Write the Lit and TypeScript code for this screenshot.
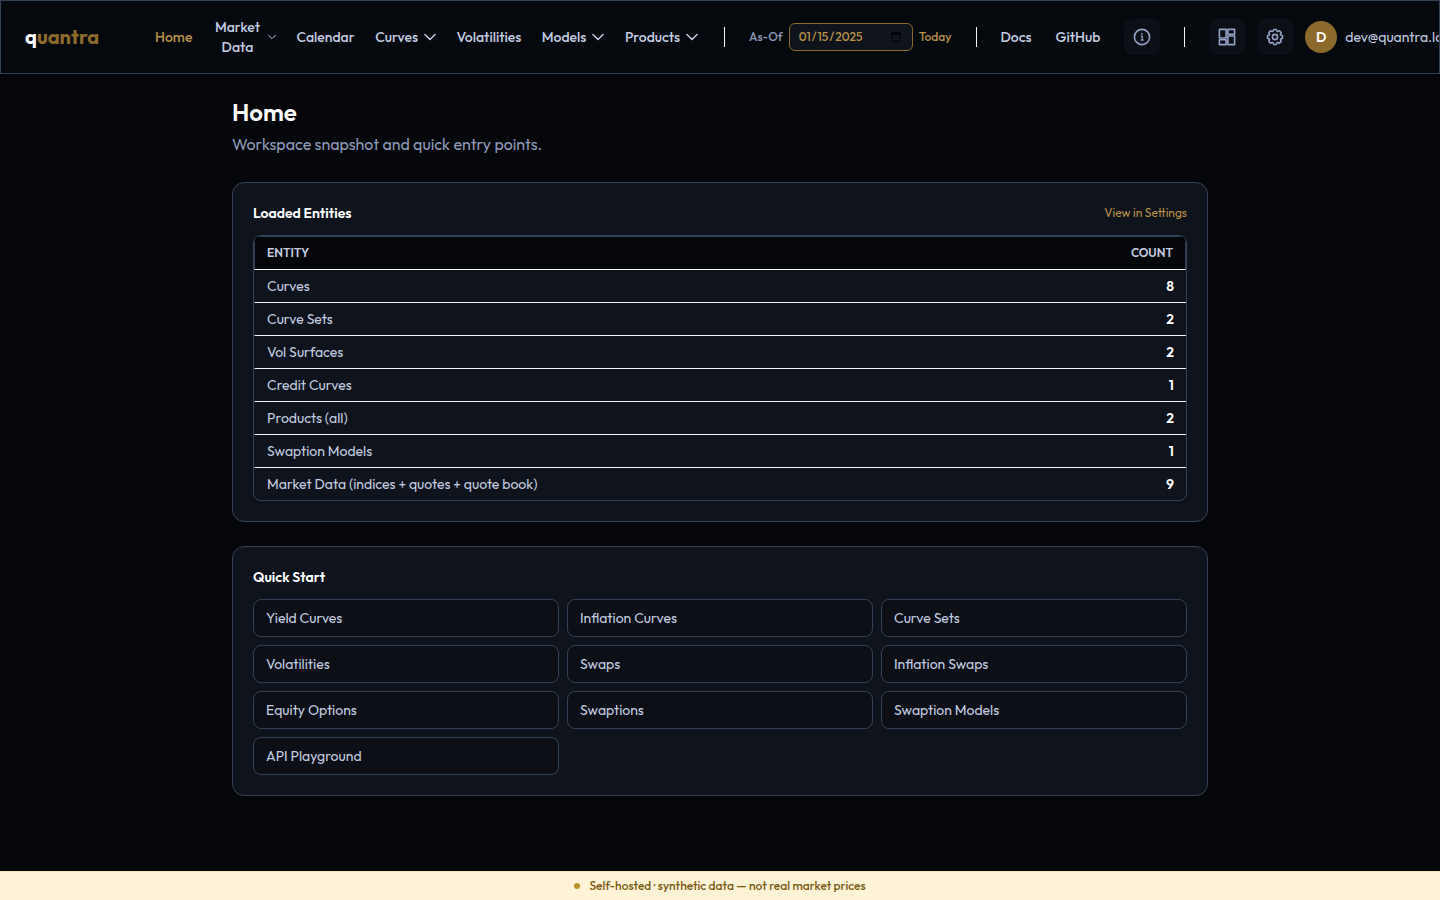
import { LitElement, html, css, svg, nothing } from "lit";
import { customElement } from "lit/decorators.js";

interface NavItem {
  label: string;
  active?: boolean;
  menu?: boolean;
  stacked?: boolean;
}

const NAV: NavItem[] = [
  { label: "Home", active: true },
  { label: "Market Data", menu: true, stacked: true },
  { label: "Calendar" },
  { label: "Curves", menu: true },
  { label: "Volatilities" },
  { label: "Models", menu: true },
  { label: "Products", menu: true },
];

const ENTITIES: [string, number][] = [
  ["Curves", 8],
  ["Curve Sets", 2],
  ["Vol Surfaces", 2],
  ["Credit Curves", 1],
  ["Products (all)", 2],
  ["Swaption Models", 1],
  ["Market Data (indices + quotes + quote book)", 9],
];

const LINKS = [
  "Yield Curves",
  "Inflation Curves",
  "Curve Sets",
  "Volatilities",
  "Swaps",
  "Inflation Swaps",
  "Equity Options",
  "Swaptions",
  "Swaption Models",
  "API Playground",
];

const infoIcon = svg`<circle cx="10" cy="10" r="7.6"/><path d="M8.8 9.2h1.4v3.6M8.7 13.1h2.9" stroke-width="1.3"/><circle cx="9.9" cy="6.8" r=".9" fill="currentColor" stroke="none"/>`;
const boardIcon = svg`<path d="M2.4 2.4h6.7v8.6H2.4zM10.9 2.4h6.7v4.8h-6.7zM10.9 9h6.7v8.6h-6.7zM2.4 12.8h6.7v4.8H2.4z"/>`;

// Eight-lobed cog outline, computed around the centre of a 20px box.
const cogPath = (() => {
  const pts: string[] = [];
  for (let i = 0; i < 8; i++) {
    const a = (i * Math.PI) / 4 - Math.PI / 2;
    for (const [r, d] of [[6.1, -0.34], [7.6, -0.16], [7.6, 0.16], [6.1, 0.34]]) {
      pts.push(`${(10 + r * Math.cos(a + d)).toFixed(2)} ${(10 + r * Math.sin(a + d)).toFixed(2)}`);
    }
  }
  return `M${pts.join("L")}Z`;
})();
const cogIcon = svg`<path d=${cogPath}/><circle cx="10" cy="10" r="2.6"/>`;

@customElement("app-root")
export class AppRoot extends LitElement {
  static styles = css`
    :host {
      --line: #334155;
      --text: #c3cce0;
      --muted: #8f9bb8;
      --gold: #b8904a;
      --deep-gold: #8c6a2c;
      display: flex;
      flex-direction: column;
      min-height: 100vh;
      background: #04060a;
      color: var(--text);
      font: 14px/20px Outfit, Lato, sans-serif;
    }
    *, *::before { box-sizing: border-box; }
    h1, h2, p { margin: 0; }
    a { color: inherit; text-decoration: none; }
    button { font: inherit; color: inherit; background: none; border: 0; padding: 0; }
    .topbar {
      display: flex;
      align-items: center;
      padding: 16px 24px;
      background: #05090e;
      border: 1px solid var(--line);
      overflow: hidden;
      white-space: nowrap;
      font-weight: 500;
    }
    .topbar > * { flex: none; }
    .logo { width: 120px; font-size: 20px; line-height: 40px; font-weight: 700; color: #fff; }
    .logo .rest { color: var(--deep-gold); }
    .nav { display: flex; align-items: center; min-width: 555px; justify-content: space-between; padding: 0 2px 0 10px; }
    .item { display: flex; align-items: center; gap: 6px; text-align: center; }
    .item.active { color: var(--gold); }
    .item.stacked { gap: 8px; padding-left: 2px; }
    .stacked .label { width: min-content; white-space: normal; }
    .chev { width: 12px; height: 12px; fill: none; stroke: currentColor; stroke-width: 1.5; stroke-linecap: round; stroke-linejoin: round; }
    .stacked .chev { width: 8px; height: 8px; }
    .rule { width: 1px; height: 20px; background: #f1f5f9; margin: 0 24px; }
    .asof { display: flex; align-items: center; gap: 6px; font-size: 12px; color: var(--muted); }
    .asof .date {
      width: 124px;
      height: 28px;
      padding: 0 8px;
      border: 1px solid var(--deep-gold);
      border-radius: 6px;
      background: #0f141c;
      color: var(--gold);
      font: inherit;
    }
    .today { color: var(--gold); }
    .docs { display: flex; gap: 24px; margin-right: 24px; }
    .tools { display: flex; align-items: center; gap: 12px; }
    .tool {
      display: grid;
      place-items: center;
      width: 36px;
      height: 36px;
      border-radius: 8px;
      background: #0c0f16;
      color: #94a3c4;
    }
    .tool svg { width: 20px; height: 20px; fill: none; stroke: currentColor; stroke-width: 1.6; stroke-linejoin: round; }
    .user { display: flex; align-items: center; gap: 8px; font-weight: 400; }
    .avatar {
      display: grid;
      place-items: center;
      width: 32px;
      height: 32px;
      border-radius: 50%;
      background: var(--deep-gold);
      color: #fff;
      font-weight: 600;
    }
    .page { flex: 1; width: 100%; max-width: 1024px; margin: 0 auto; padding: 24px; }
    .title { font-size: 24px; line-height: 28px; font-weight: 600; color: #fff; }
    .lead { margin: 6px 0 26px; font-size: 16px; line-height: 24px; color: var(--muted); }
    .card { padding: 20px; margin-bottom: 24px; background: #0f141c; border: 1px solid var(--line); border-radius: 12px; }
    .head { display: flex; justify-content: space-between; align-items: center; margin-bottom: 12px; }
    .name { font-size: 14px; line-height: 20px; font-weight: 600; color: #fff; }
    .more { font-size: 12px; color: var(--gold); }
    .frame { border: 1px solid var(--line); border-radius: 8px; overflow: hidden; }
    .table { width: 100%; border-collapse: separate; border-spacing: 0; }
    .table th, .table td { padding: 6px 12px; text-align: left; border-bottom: 1px solid #f1f5f9; }
    .table td:first-child { border-left: 1px solid transparent; }
    .table th {
      background: #04060a;
      border-top: 1px solid var(--line);
      font-size: 12px;
      line-height: 20px;
      font-weight: 600;
      text-transform: uppercase;
    }
    .table th:first-child { border-left: 1px solid var(--line); }
    .table th:last-child { border-right: 1px solid var(--line); }
    .table tr:last-child td { border-bottom: 0; }
    .table .num { text-align: right; }
    .table td.num { font-weight: 600; color: #fff; }
    .grid { display: grid; grid-template-columns: repeat(3, 1fr); gap: 8px; }
    .quick { padding: 8px 12px; border: 1px solid var(--line); border-radius: 8px; background: #0c0f16; }
    .banner {
      display: flex;
      align-items: center;
      justify-content: center;
      gap: 9px;
      padding: 4px 16px;
      border-top: 1px solid #f5e3b5;
      background: #fef3d7;
      color: #7d5a14;
      font-size: 12px;
      font-weight: 500;
    }
    .dot { width: 6px; height: 6px; border-radius: 50%; background: #b8922a; }
  `;

  private chevron() {
    return html`<svg class="chev" viewBox="0 0 12 12" aria-hidden="true"><path d="M1 3.5l5 5 5-5" /></svg>`;
  }

  private navItem(n: NavItem) {
    const cls = `item${n.active ? " active" : ""}${n.stacked ? " stacked" : ""}`;
    return n.menu
      ? html`<button class=${cls}><span class="label">${n.label}</span>${this.chevron()}</button>`
      : html`<a class=${cls} href="#" aria-current=${n.active ? "page" : nothing}>${n.label}</a>`;
  }

  private tool(label: string, icon: unknown) {
    return html`<button class="tool" aria-label=${label}><svg viewBox="0 0 20 20">${icon}</svg></button>`;
  }

  render() {
    return html`
      <header class="topbar">
        <a class="logo" href="#">q<span class="rest">uantra</span></a>
        <nav class="nav">${NAV.map((n) => this.navItem(n))}</nav>
        <span class="rule"></span>
        <div class="asof">
          <label for="asof">As-Of</label>
          <input class="date" id="asof" type="date" value="2025-01-15" />
          <button class="today">Today</button>
        </div>
        <span class="rule"></span>
        <div class="docs"><a href="#">Docs</a><a href="#">GitHub</a></div>
        ${this.tool("About", infoIcon)}
        <span class="rule"></span>
        <div class="tools">
          ${this.tool("Dashboard", boardIcon)} ${this.tool("Settings", cogIcon)}
          <div class="user"><span class="avatar">D</span><span>dev@quantra.local</span></div>
        </div>
      </header>
      <main class="page">
        <h1 class="title">Home</h1>
        <p class="lead">Workspace snapshot and quick entry points.</p>
        <section class="card">
          <div class="head">
            <h2 class="name">Loaded Entities</h2>
            <a class="more" href="#">View in Settings</a>
          </div>
          <div class="frame">
            <table class="table">
              <thead><tr><th>Entity</th><th class="num">Count</th></tr></thead>
              <tbody>
                ${ENTITIES.map(([name, n]) => html`<tr><td>${name}</td><td class="num">${n}</td></tr>`)}
              </tbody>
            </table>
          </div>
        </section>
        <section class="card">
          <div class="head"><h2 class="name">Quick Start</h2></div>
          <div class="grid">${LINKS.map((l) => html`<a class="quick" href="#">${l}</a>`)}</div>
        </section>
      </main>
      <footer class="banner">
        <span class="dot"></span><span>Self-hosted · synthetic data — not real market prices</span>
      </footer>
    `;
  }
}
